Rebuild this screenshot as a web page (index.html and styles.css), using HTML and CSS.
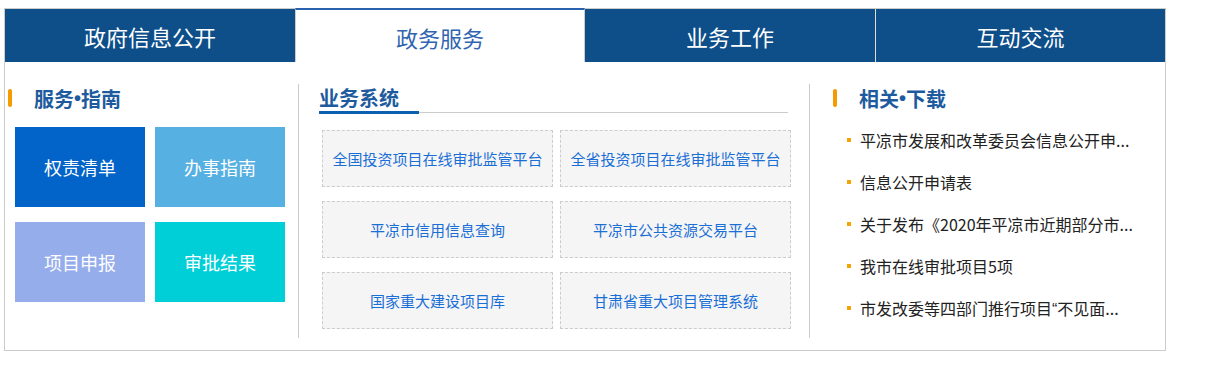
FILE: index.html
```html
<!DOCTYPE html>
<html lang="zh-CN">
<head>
  <meta charset="UTF-8" />
  <meta name="viewport" content="width=device-width, initial-scale=1.0" />
  <title>政务服务</title>
  <link rel="stylesheet" href="styles.css">
</head>
<body>
  <div class="box-wrap">
    <div class="tabs">
      <a href="#" class="tab">政府信息公开</a>
      <a href="#" class="tab active">政务服务</a>
      <a href="#" class="tab">业务工作</a>
      <a href="#" class="tab tab-last">互动交流</a>
    </div>

    <div class="panel">
      <div class="col col-guide">
        <h3 class="col-title"><i class="mark"></i>服务<span class="latin">•</span>指南</h3>
        <div class="tiles">
          <a href="#" class="tile tile-1">权责清单</a>
          <a href="#" class="tile tile-2">办事指南</a>
          <a href="#" class="tile tile-3">项目申报</a>
          <a href="#" class="tile tile-4">审批结果</a>
        </div>
      </div>

      <div class="col col-sys">
        <h3 class="sys-title"><span>业务系统</span></h3>
        <div class="sys-grid">
          <a href="#" class="sys-item">全国投资项目在线审批监管平台</a>
          <a href="#" class="sys-item">全省投资项目在线审批监管平台</a>
          <a href="#" class="sys-item">平凉市信用信息查询</a>
          <a href="#" class="sys-item">平凉市公共资源交易平台</a>
          <a href="#" class="sys-item">国家重大建设项目库</a>
          <a href="#" class="sys-item">甘肃省重大项目管理系统</a>
        </div>
      </div>

      <div class="col col-down">
        <h3 class="col-title"><i class="mark"></i>相关<span class="latin">•</span>下载</h3>
        <ul class="down-list">
          <li><a href="#">平凉市发展和改革委员会信息公开申...</a></li>
          <li><a href="#">信息公开申请表</a></li>
          <li><a href="#">关于发布《2020年平凉市近期部分市...</a></li>
          <li><a href="#">我市在线审批项目5项</a></li>
          <li><a href="#">市发改委等四部门推行项目<span class="latin">“</span>不见面...</a></li>
        </ul>
      </div>
    </div>
  </div>
</body>
</html>
```

FILE: styles.css
```css
body {
  margin: 0;
  font-family: "Noto Sans CJK SC", "Noto Sans", sans-serif;
  background-color: #fff;
  color: #222;
}

a {
  text-decoration: none;
}

.latin {
  font-family: "Liberation Sans", sans-serif;
}

.box-wrap {
  width: 1160px;
  margin: 8px 0 0 4px;
  border: 1px solid #ccc;
}

.tabs {
  display: grid;
  grid-template-columns: repeat(4, 290px);
  height: 53px;
}

.tab {
  display: flex;
  align-items: center;
  justify-content: center;
  background-color: #0e4f8a;
  color: #fff;
  font-size: 22px;
  line-height: 1;
}

.tab.active {
  background-color: #fff;
  color: #2f64b0;
  border-top: 2px solid #2a62ad;
  border-left: 1px solid #ccc;
  border-right: 1px solid #ccc;
  margin-top: -1px;
  padding-top: 2px;
}

.tab-last {
  border-left: 1px solid #e0ddd5;
}

.panel {
  display: flex;
  height: 288px;
}

.col {
  margin: 22px 0 12px;
}

.col-guide {
  width: 293px;
  border-right: 1px solid #ccc;
}

.col-sys {
  width: 511px;
  box-sizing: border-box;
  border-right: 1px solid #ccc;
  padding-left: 20px;
}

.col-down {
  flex: 1;
  padding-left: 23px;
}

.col-title {
  display: flex;
  align-items: center;
  margin: 0;
  height: 28px;
  font-size: 20px;
  font-weight: bold;
  color: #1e5b9e;
}

.col-guide .col-title {
  padding-left: 3px;
}

.mark {
  width: 4px;
  height: 18px;
  border-radius: 2px;
  background-color: #f59a00;
  margin-right: 22px;
}

.tiles {
  display: grid;
  grid-template-columns: 130px 130px;
  grid-auto-rows: 80px;
  gap: 15px 10px;
  margin: 15px 0 0 10px;
}

.tile {
  display: flex;
  align-items: center;
  justify-content: center;
  color: #fff;
  font-size: 18px;
}

.tile-1 { background-color: #0264c8; }
.tile-2 { background-color: #56b0e2; }
.tile-3 { background-color: #95adeb; }
.tile-4 { background-color: #00cfd8; }

.sys-title {
  display: flex;
  align-items: flex-start;
  width: 469px;
  margin: 0;
  border-bottom: 1px solid #ccc;
  font-size: 20px;
  font-weight: bold;
  color: #1e5b9e;
}

.sys-title span {
  width: 100px;
  height: 27px;
  line-height: 27px;
  border-bottom: 3px solid #0d5fb0;
  margin-bottom: -2px;
}

.sys-grid {
  display: grid;
  grid-template-columns: 231px 231px;
  grid-auto-rows: 57px;
  gap: 14px 7px;
  margin: 17px 0 0 3px;
}

.sys-item {
  display: flex;
  align-items: center;
  justify-content: center;
  background-color: #f5f5f5;
  border: 1px dashed #ccc;
  color: #1a6fd6;
  font-size: 15px;
}

.down-list {
  list-style: none;
  margin: 7px 0 0;
  padding: 0 0 0 14px;
}

.down-list li {
  position: relative;
  height: 42px;
  line-height: 42px;
  padding-left: 13px;
  font-size: 16px;
}

.down-list li::before {
  content: "";
  position: absolute;
  left: 0;
  top: 19px;
  width: 4px;
  height: 4px;
  background-color: #f5a300;
}

.down-list a {
  color: #222;
  white-space: nowrap;
}
```
